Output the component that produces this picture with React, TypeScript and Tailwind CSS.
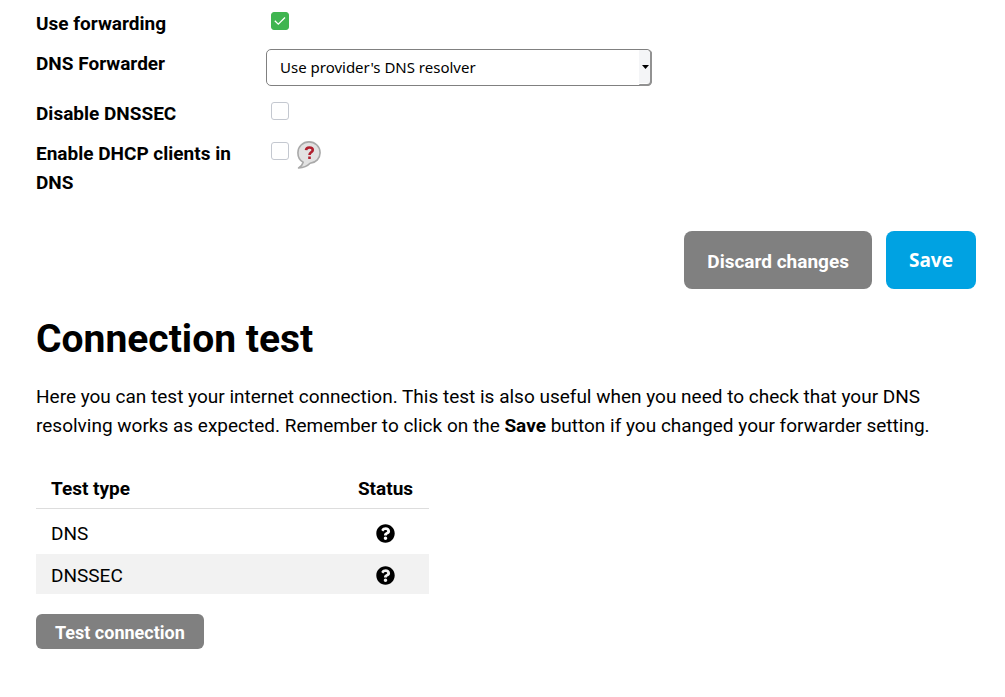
import React from "react";
import { FaQuestionCircle } from "react-icons/fa";

const labelClass = "w-[214px] shrink-0 text-[19px] leading-[29px] font-bold";

function CheckRow({ id, label, checked, help }: { id: string; label: string; checked?: boolean; help?: boolean }) {
  return (
    <div className="flex items-start pb-[11px]">
      <label htmlFor={id} className={labelClass}>{label}</label>
      <div className="ml-[21px] flex items-start gap-2">
        <span className="grid pt-[3px]">
          <input id={id} type="checkbox" defaultChecked={checked} className="peer col-start-1 row-start-1 size-[18px] appearance-none rounded-[3px] border border-[#c4c8d0] bg-white checked:border-[#3fb550] checked:bg-[#3fb550]" />
          <svg viewBox="0 0 18 18" className="pointer-events-none invisible col-start-1 row-start-1 size-[18px] peer-checked:visible" fill="none" stroke="white" strokeWidth="1.3">
            <path d="M3.8 8.8 L7.3 12.2 L14 5.5" />
          </svg>
        </span>
        {help && (
          <button type="button" aria-label="Help" className="pt-[2px]">
            <svg viewBox="0 0 24 28" className="h-7 w-6">
              <path d="M12 .9C5.800 .9 .9 5.600 .9 11.800c0 4.300 2 7.700 5.300 9.500C5.600 23.600 4 25.600 1.600 27c4.900-.2 8.600-1.600 11.500-4.700C19 21.700 23.100 17.300 23.100 11.800 23.100 5.600 18.200 .9 12 .9Z" fill="#e2e2e2" stroke="#a9a9a9" strokeWidth="1.600" strokeLinejoin="round" />
              <path d="M9 9.200C9.200 7.200 10.400 6.500 12.300 6.500c2.100 0 3.500 .8 3.500 2.500 0 2.300-3.300 2.300-3.300 4.900M12.500 15.600v2.400" fill="none" stroke="#b01f2e" strokeWidth="2.600" />
            </svg>
          </button>
        )}
      </div>
    </div>
  );
}

export default function App() {
  return (
    <main className="bg-white pt-[9px] pr-[29px] pb-12 pl-9 font-['Roboto',sans-serif] text-[19px] leading-[29px] text-black">
      <form onSubmit={(e) => e.preventDefault()}>
        <CheckRow id="forwarding" label="Use forwarding" checked />
        <div className="flex items-start pb-[13px]">
          <label htmlFor="forwarder" className={labelClass}>DNS Forwarder</label>
          <div className="ml-4 grid w-[386px]">
            <select id="forwarder" className="col-start-1 row-start-1 h-[37px] w-full appearance-none rounded-[5px] border border-[#808080] bg-white px-[13px] font-['Noto_Sans',sans-serif] text-[15px]">
              <option>Use provider's DNS resolver</option>
            </select>
            <svg viewBox="0 0 13 37" className="pointer-events-none col-start-1 row-start-1 h-[37px] w-[13px] justify-self-end" aria-hidden="true">
              <path d="M0 1H8Q11 1 11 4V34H0Z" fill="#f4f5f7" />
              <path d="M0 35H8Q11 35 11 32V3L9 1Q13 1 13 5V32Q13 37 8 37H1Z" fill="#929292" />
              <path d="M3 16H10L6.500 20Z" fill="black" />
            </svg>
          </div>
        </div>
        <CheckRow id="dnssec" label="Disable DNSSEC" />
        <CheckRow id="dhcp" label="Enable DHCP clients in DNS" help />
        <div className="mt-[23px] flex justify-end gap-[14px]">
          <button type="button" className="h-[58px] rounded-lg bg-[#808080] px-[23px] pt-[2px] font-bold text-white">Discard changes</button>
          <button type="submit" className="h-[58px] rounded-lg bg-[#00a2e2] px-[23px] font-['Noto_Sans',sans-serif] font-bold text-white">Save</button>
        </div>
      </form>
      <section>
        <h1 className="mt-[26px] text-[39px] leading-[48px] font-bold">Connection test</h1>
        <p className="mt-[19px]">Here you can test your internet connection. This test is also useful when you need to check that your DNS resolving works as expected. Remember to click on the <strong>Save</strong> button if you changed your forwarder setting.</p>
        <table className="mt-[29px] w-[393px] table-fixed">
          <thead><tr className="h-[39px] border-b border-[#ddd]"><th className="px-[15px] text-left">Test type</th><th className="w-[87px]">Status</th></tr></thead>
          <tbody>
            <tr className="h-[46px]"><td className="px-[15px] pt-1">DNS</td><td className="pt-1"><FaQuestionCircle className="mx-auto" role="img" aria-label="Unknown" /></td></tr>
            <tr className="h-10 bg-[#f2f2f2]"><td className="px-[15px] pt-[2px]">DNSSEC</td><td className="pt-[2px]"><FaQuestionCircle className="mx-auto" role="img" aria-label="Unknown" /></td></tr>
          </tbody>
        </table>
        <button type="button" className="mt-5 h-[35px] rounded-md bg-[#808080] px-[19px] pt-[2px] text-[18px] font-bold text-white">Test connection</button>
      </section>
    </main>
  );
}
